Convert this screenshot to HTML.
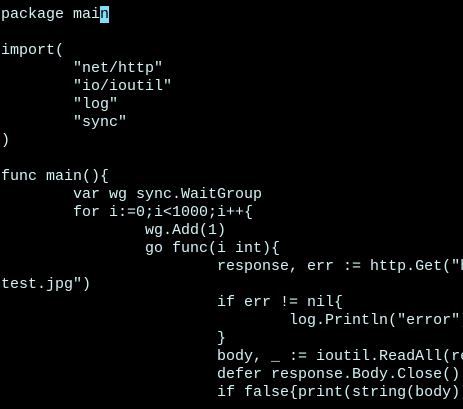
<!DOCTYPE html>
<html><head><style>
html,body{margin:0;padding:0;background:#000;width:463px;height:409px;overflow:hidden}
pre{margin:0;position:absolute;left:1px;top:6px;font-family:"Liberation Mono",monospace;font-size:15px;line-height:18px;color:#d2f2f4;white-space:pre}
.c{background:#7fe0f8;color:#000}
</style></head><body>
<pre>package mai<span class="c">n</span>

import(
        "net/http"
        "io/ioutil"
        "log"
        "sync"
)

func main(){
        var wg sync.WaitGroup
        for i:=0;i&lt;1000;i++{
                wg.Add(1)
                go func(i int){
                        response, err := http.Get("h
test.jpg")
                        if err != nil{
                                log.Println("error"))
                        }
                        body, _ := ioutil.ReadAll(re
                        defer response.Body.Close()
                        if false{print(string(body))}
</pre>
</body></html>
